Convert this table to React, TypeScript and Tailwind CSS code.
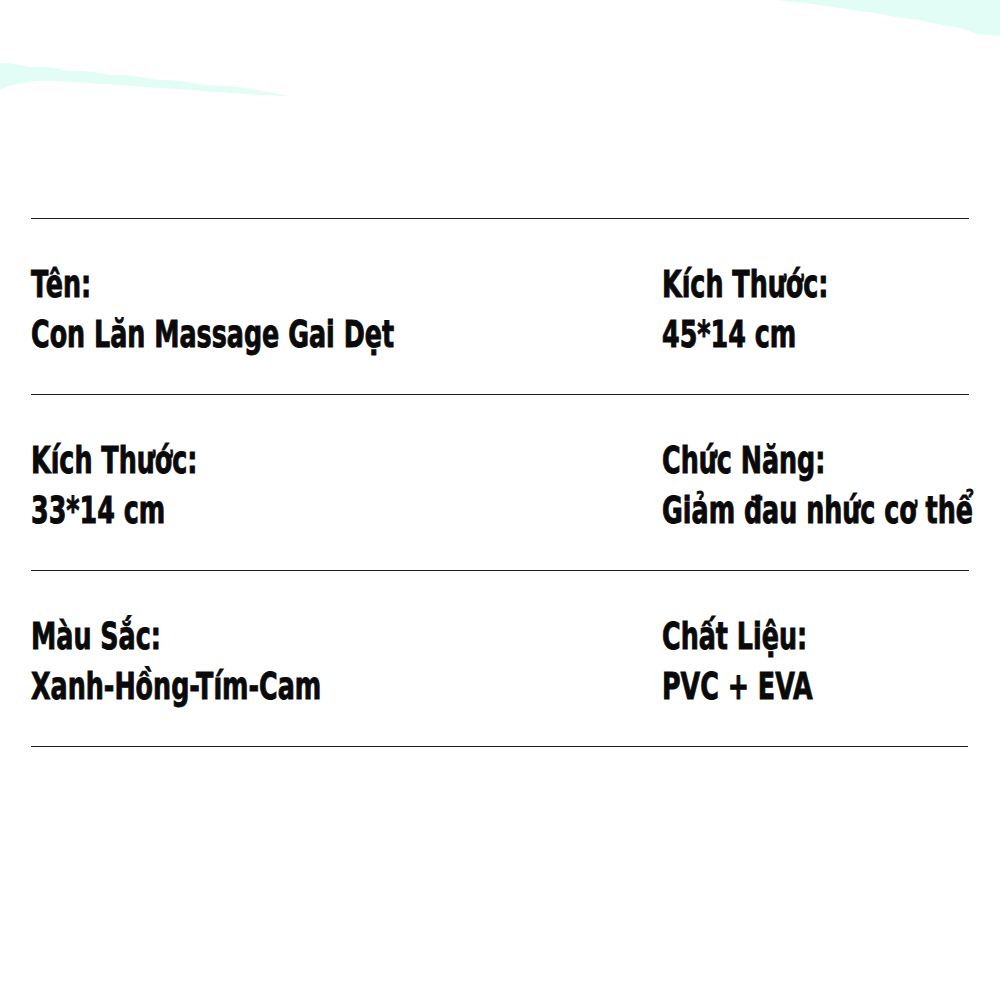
import React from "react";

const rows = [
  [
    ["Tên:", "Con Lăn Massage Gai Dẹt"],
    ["Kích Thước:", "45*14 cm"],
  ],
  [
    ["Kích Thước:", "33*14 cm"],
    ["Chức Năng:", "Giảm đau nhức cơ thể"],
  ],
  [
    ["Màu Sắc:", "Xanh-Hồng-Tím-Cam"],
    ["Chất Liệu:", "PVC + EVA"],
  ],
];

function Cell({ label, value }: { label: string; value: string }) {
  return (
    <div className="flex flex-col origin-left scale-x-[0.668] whitespace-nowrap [-webkit-text-stroke:1px_#0a0a0a]">
      <div className="text-[38px] leading-[50px]">{label}</div>
      <div className="text-[38px] leading-[50px]">{value}</div>
    </div>
  );
}

export default function App() {
  return (
    <div
      className="relative w-[1000px] h-[1000px] bg-white overflow-hidden text-[#0a0a0a] font-bold"
      style={{ fontFamily: '"DejaVu Sans", sans-serif' }}
    >
      <svg className="absolute left-0 top-0" width="1000" height="120" viewBox="0 0 1000 120">
        <path
          d="M0 63 C15 62 25 68 40 67 C55 66 65 72 80 71 C95 71 105 76 120 75 C135 75 150 80 165 80 C185 80 200 86 220 86 C240 86 260 91 290 96 C260 95 240 94 220 92 C200 91 180 89 160 88 C140 87 120 84 100 84 C80 83 60 80 40 81 C25 82 12 84 0 90 Z"
          fill="#e2fcf6"
        />
        <path
          d="M775 0 L1000 0 L1000 36 C990 35 985 35 978 34 C968 31 960 27 950 26 C940 25 932 23 925 21 C915 19 905 18 895 17 C885 15 878 13 868 12 C858 11 850 9 840 8 C830 7 822 5 812 4 C800 3 790 1 775 0 Z"
          fill="#e2fcf6"
        />
      </svg>
      <div className="relative px-[31px] pt-[218px]">
        {rows.map((r, i) => (
          <div
            key={i}
            className="grid grid-cols-[631px_1fr] border-t-[1.5px] border-[#1a1a1a] h-[176px] pt-[40px]"
          >
            <Cell label={r[0][0]} value={r[0][1]} />
            <Cell label={r[1][0]} value={r[1][1]} />
          </div>
        ))}
        <div className="border-t-[1.5px] border-[#1a1a1a] w-[937px]" />
      </div>
    </div>
  );
}
